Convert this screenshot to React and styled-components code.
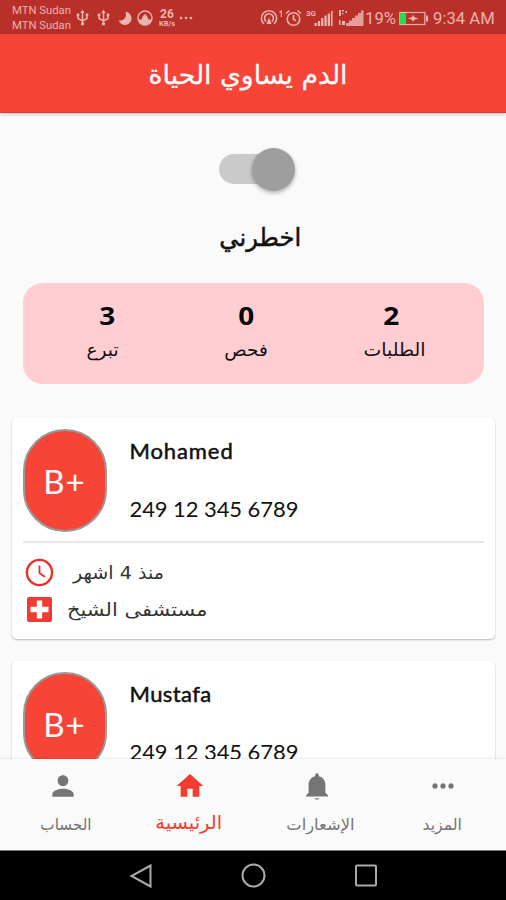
/* eslint-disable react/prop-types */
import React, { useState } from "react";
import styled, { createGlobalStyle } from "styled-components";

const GlobalStyle = createGlobalStyle`
    * {
        box-sizing: border-box;
    }

    body {
        margin: 0;
        background: #fafafa;
    }
`;

const Screen = styled.div`
    display: flex;
    flex-direction: column;
    width: 506px;
    height: 900px;
    overflow: hidden;
    background: #fafafa;
    color: #111;
    font-family: Lato, "DejaVu Sans", sans-serif;
`;

//  scaled inline text, $sx tunes the glyph width
const Label = styled.span`
    display: block;
    margin-left: ${(p) => p.$shift || 0}px;
    font-family: "DejaVu Sans", sans-serif;
    font-size: ${(p) => p.$size}px;
    line-height: ${(p) => p.$line || 24}px;
    white-space: nowrap;
    transform: scaleX(${(p) => p.$sx || 1});
    transform-origin: ${(p) => p.$origin || "center"};
    -webkit-text-stroke: ${(p) => p.$stroke || 0}px currentColor;
`;

const StatusBar = styled.div`
    display: flex;
    align-items: center;
    flex: none;
    height: 34px;
    padding: 2px 11px 0 12px;
    background: #b93029;
    color: #e9b3ae;
    font-family: Roboto, sans-serif;

    svg {
        flex: none;
        display: block;
    }
`;

const Carrier = styled.div`
    width: 61px;
    margin-right: 3px;
    font-size: 11.3px;
    line-height: 15.5px;
    white-space: nowrap;
`;

const Speed = styled.div`
    display: flex;
    flex-direction: column;
    align-items: center;
    width: 18px;
    margin: 0 3px 0 5px;
    font-size: 12px;
    font-weight: 700;
    line-height: 12px;
`;

const SpeedUnit = styled.span`
    font-size: 7.5px;
    line-height: 8px;
`;

const Spacer = styled.div`
    flex: 1;
`;

const StatusText = styled.span`
    width: ${(p) => p.$width}px;
    font-size: 16.7px;
    white-space: nowrap;
`;

const AppBar = styled.header`
    display: flex;
    justify-content: center;
    align-items: center;
    flex: none;
    height: 79px;
    padding: 4px 11px 0 0;
    background: #f64436;
    border-bottom: 1px solid #d93a2c;
    box-shadow: 0 1px 4px rgba(0, 0, 0, 0.25);
    color: #fff;
    z-index: 1;
`;

const Content = styled.main`
    flex: 1;
    min-height: 0;
    overflow: hidden;
    display: flex;
    flex-direction: column;
    align-items: center;
`;

const Track = styled.button`
    display: flex;
    align-items: center;
    justify-content: ${(p) => (p.$on ? "flex-end" : "flex-start")};
    flex: none;
    width: 76px;
    height: 30px;
    margin: 41px 0 0 8px;
    padding: 0;
    border: 0;
    background: linear-gradient(#cacaca, #cacaca) no-repeat;
    background-size: 68px 30px;
    border-radius: 15px;
`;

const Thumb = styled.span`
    width: 43px;
    height: 43px;
    flex: none;
    border-radius: 50%;
    background: #9e9e9e;
    box-shadow: 0 2px 4px rgba(0, 0, 0, 0.3);
`;

const SwitchCaption = styled.div`
    flex: none;
    margin: 39px 0 0 15px;
    height: 60px;
`;

const Stats = styled.section`
    display: grid;
    grid-template-columns: 124px 153px 138px;
    justify-content: start;
    flex: none;
    width: 461px;
    height: 101px;
    padding: 17px 0 0 23px;
    border-radius: 20px;
    background: #ffcdd2;
    text-align: center;
`;

const Stat = styled.div`
    display: flex;
    flex-direction: column;
    align-items: center;
`;

const StatValue = styled.b`
    font-family: "Open Sans", sans-serif;
    font-size: 25px;
    font-weight: 700;
    line-height: 31px;
    color: #080808;
    transform: scaleX(1.12);
`;

const Card = styled.article`
    flex: none;
    width: 483px;
    height: 221px;
    margin-top: ${(p) => p.$gap}px;
    padding: 11px 11px 0;
    background: #fff;
    border-radius: 5px;
    box-shadow: 0 1px 2px rgba(0, 0, 0, 0.28);
`;

const CardHead = styled.div`
    display: flex;
    height: 114px;
    border-bottom: 2px solid #e6e6e6;
`;

const Avatar = styled.div`
    display: flex;
    justify-content: center;
    align-items: center;
    width: 84px;
    height: 103px;
    border: 2px solid #999;
    border-radius: 42px;
    background: #f64436;
    color: #fff;
    font-size: 33px;
    letter-spacing: 1px;
`;

const Person = styled.div`
    margin-left: 23px;
    padding-top: 8px;
`;

const Name = styled.div`
    height: 58px;
    font-size: 22px;
    font-weight: 400;
    line-height: 28px;
    letter-spacing: ${(p) => p.$spacing || 0}px;
    -webkit-text-stroke: 0.5px #111;
`;

const Phone = styled.div`
    font-size: 22px;
    line-height: 28px;
    letter-spacing: -0.08px;
    white-space: nowrap;
`;

const Detail = styled.div`
    display: flex;
    align-items: center;
    height: 37px;
    padding-left: 2px;
    margin-top: ${(p) => p.$top || 0}px;
    color: #333;

    svg {
        flex: none;
        margin-right: ${(p) => p.$gap}px;
    }
`;

const BottomNav = styled.nav`
    display: grid;
    grid-template-columns: 126px 127px 127px 126px;
    flex: none;
    height: 91px;
    background: #fafafa;
    box-shadow: 0 -1px 2px rgba(0, 0, 0, 0.08);
    z-index: 1;
`;

const NavItem = styled.div`
    display: flex;
    flex-direction: column;
    align-items: center;
    padding-top: 11px;
    color: ${(p) => (p.$active ? "#f43b2f" : "#757575")};

    svg {
        display: block;
        margin-bottom: ${(p) => (p.$active ? 4 : 7)}px;
    }
`;

const SystemBar = styled.footer`
    display: flex;
    justify-content: center;
    align-items: center;
    gap: 88px;
    flex: none;
    height: 50px;
    background: #000;
    border-top: 1px solid #777;
`;

const UsbIcon = () => (
    <svg width="21" height="18" viewBox="0 0 21 18" fill="none" stroke="currentColor" strokeWidth="1.5">
        <path d="M6.500 2v13M2 6v3.500L6.500 12 11 9.500V6" />
        <path d="M4.300 4 6.500.8 8.700 4zM.7 4.600h2.600v2.600H.7zM9.700 4.600h2.600v2.600H9.700zM5 13.600h3v2.600H5z" fill="currentColor" stroke="none" />
    </svg>
);

const MoonIcon = () => (
    <svg width="19" height="15" viewBox="0 0 19 15">
        <path d="M7.500.8A6.600 6.600 0 1 1 .6 9.200C5 10.800 9.500 6.500 7.500.8z" fill="currentColor" />
    </svg>
);

const DomeIcon = () => (
    <svg width="16" height="16" viewBox="0 0 16 16">
        <circle cx="8" cy="8" r="7" fill="none" stroke="currentColor" strokeWidth="1.4" />
        <path d="M1.500 9.500h3l1.500-3.500L8 4l2 2 1.500 3.500h3a6.600 6.600 0 0 1-13 0z" fill="currentColor" />
    </svg>
);

const DotsIcon = () => (
    <svg width="14" height="4" viewBox="0 0 14 4" fill="currentColor">
        <circle cx="2" cy="2" r="1.300" />
        <circle cx="7" cy="2" r="1.300" />
        <circle cx="12" cy="2" r="1.300" />
    </svg>
);

const HotspotIcon = () => (
    <svg width="25" height="20" viewBox="0 0 25 20" fill="none" stroke="currentColor" strokeWidth="1.6">
        <path d="M4 16a7.600 7.600 0 1 1 10 0M6.200 13.500a4.400 4.400 0 1 1 5.600 0" />
        <path d="M9 9.500 11.500 16h-5z" fill="currentColor" stroke="none" />
        <path d="M19.500 4.200 21.300 3v6" strokeWidth="1.2" />
    </svg>
);

const AlarmIcon = () => (
    <svg width="17" height="18" viewBox="0 0 17 18" fill="none" stroke="currentColor" strokeWidth="1.6">
        <circle cx="8.500" cy="10" r="6.300" />
        <path d="M8.500 6v4.300l2.600 1.500M1 4.500 4.500 1.500M16 4.500l-3.500-3" />
    </svg>
);

const SignalIcon = () => (
    <svg width="32" height="19" viewBox="-4 0 32 19" fill="currentColor">
        <text x="0" y="7" fontSize="8" fontWeight="700" fontFamily="Roboto">3G</text>
        <path d="M8.500 14h2.300v3H8.500zM11.800 12h2.300v5h-2.300zM15.100 9h2.300v8h-2.300zM18.400 6.500h2.300V17h-2.300zM21.700 4.500H24V17h-2.300zM25 2h1.600v15H25z" />
    </svg>
);

const RoamingSignalIcon = () => (
    <svg width="31" height="19" viewBox="-3 0 31 19" fill="currentColor">
        <path d="M26.500 1.500V17H9v-3h3v-2.500h3V9h3V6.500h3V4h3V1.500z" opacity="0.85" />
        <path d="M2 1h2v6H2zM5 1h2v1.500H5zM5 4h1.500v1.300H5zM8.500 2H10v2H8.500zM2 11h1.500v5H2zM5 12h3v4H5z" />
    </svg>
);

const BatteryIcon = () => (
    <svg width="34" height="15" viewBox="0 0 34 15">
        <rect x=".8" y="1.500" width="25" height="12" fill="none" stroke="currentColor" strokeWidth="1.2" />
        <path d="M27 4.500h2v6h-2z" fill="currentColor" />
        <path d="M1 2h6v11H1z" fill="#20dd55" />
        <path d="M8.500 7.500 13 6l1-2 2 2.500 3.500 1-4 1.200-1.500 2-1.500-2.200z" fill="currentColor" />
    </svg>
);

const ClockIcon = () => (
    <svg width="29" height="29" viewBox="0 0 29 29" fill="none" stroke="#ec2f27" strokeWidth="2.4">
        <circle cx="14.500" cy="14.500" r="12.600" />
        <path d="M14.500 7.500v7.500l5.500 4" strokeWidth="1.8" />
    </svg>
);

const HospitalIcon = () => (
    <svg width="29" height="29" viewBox="0 0 29 29">
        <rect x="2" y="2" width="25" height="25" rx="2" fill="#f03a32" />
        <path d="M11.800 5.500h5.400v6.300h6.300v5.400h-6.300v6.300h-5.400v-6.300H5.500v-5.400h6.300z" fill="#fff" />
    </svg>
);

const navIcons = {
    account: "M12 12c2.210 0 4-1.790 4-4s-1.790-4-4-4-4 1.790-4 4 1.790 4 4 4zm0 2c-2.670 0-8 1.340-8 4v2h16v-2c0-2.660-5.330-4-8-4z",
    home: "M10 20v-6h4v6h5v-8h3L12 3 2 12h3v8z",
    bell: "M12 22.200c1 0 1.800-.5 1.800-1.100h-3.600c0 .6.8 1.100 1.800 1.100zM18.300 17v-6c0-3.100-1.900-5.600-4.900-6.300V3.900C13.400 3.100 12.800 2.500 12 2.500s-1.400.6-1.400 1.400v.8C7.600 5.400 5.700 7.900 5.700 11v6L3.800 19v.8h16.400V19z",
    more: "M6 10c-1.100 0-2 .9-2 2s.9 2 2 2 2-.9 2-2-.9-2-2-2zm12 0c-1.100 0-2 .9-2 2s.9 2 2 2 2-.9 2-2-.9-2-2-2zm-6 0c-1.100 0-2 .9-2 2s.9 2 2 2 2-.9 2-2-.9-2-2-2z",
};

const NavIcon = ({ name }) => (
    <svg width="32" height="32" viewBox="0 0 24 24" fill="currentColor">
        <path d={navIcons[name]} />
    </svg>
);

const stats = [
    { value: 3, text: "تبرع", sx: 1.03, shift: -10 },
    { value: 0, text: "فحص", sx: 1.03, shift: 0 },
    { value: 2, text: "الطلبات", sx: 1.05, shift: 6 },
];

const donors = [
    { name: "Mohamed", spacing: 0.9, gap: 34 },
    { name: "Mustafa", spacing: 0.4, gap: 22 },
];

const tabs = [
    { icon: "account", text: "الحساب", size: 16, sx: 0.95, shift: 6 },
    { icon: "home", text: "الرئيسية", size: 19, sx: 1.02, shift: -2 },
    { icon: "bell", text: "الإشعارات", size: 16, sx: 1.02, shift: 8 },
    { icon: "more", text: "المزيد", size: 16, sx: 0.98, shift: -1 },
];

export default function App() {
    const [notify, setNotify] = useState(true);

    return (
        <Screen>
            <GlobalStyle />
            <StatusBar>
                <Carrier>MTN Sudan<br />MTN Sudan</Carrier>
                <UsbIcon />
                <UsbIcon />
                <MoonIcon />
                <DomeIcon />
                <Speed>
                    <span>26</span>
                    <SpeedUnit>KB/s</SpeedUnit>
                </Speed>
                <DotsIcon />
                <Spacer />
                <HotspotIcon />
                <AlarmIcon />
                <SignalIcon />
                <RoamingSignalIcon />
                <StatusText $width={34}>19%</StatusText>
                <BatteryIcon />
                <StatusText $width={62}>9:34 AM</StatusText>
            </StatusBar>
            <AppBar>
                <Label dir="rtl" $size={26} $line={36} $sx={1.025} $stroke={0.3}>الدم يساوي الحياة</Label>
            </AppBar>
            <Content>
                <Track $on={notify} onClick={() => setNotify(!notify)}>
                    <Thumb />
                </Track>
                <SwitchCaption>
                    <Label dir="rtl" $size={25} $line={30} $sx={0.97} $stroke={0.5}>اخطرني</Label>
                </SwitchCaption>
                <Stats>
                    {stats.map((s) => (
                        <Stat key={s.text}>
                            <StatValue>{s.value}</StatValue>
                            <Label dir="rtl" $size={18} $line={38} $sx={s.sx} $shift={s.shift}>{s.text}</Label>
                        </Stat>
                    ))}
                </Stats>
                {donors.map((d) => (
                    <Card key={d.name} $gap={d.gap}>
                        <CardHead>
                            <Avatar>B+</Avatar>
                            <Person>
                                <Name $spacing={d.spacing}>{d.name}</Name>
                                <Phone>249 12 345 6789</Phone>
                            </Person>
                        </CardHead>
                        <Detail $top={11} $gap={19}>
                            <ClockIcon />
                            <Label dir="rtl" $size={18} $sx={1.06} $origin="left">منذ 4 اشهر</Label>
                        </Detail>
                        <Detail $gap={13}>
                            <HospitalIcon />
                            <Label dir="rtl" $size={18} $sx={1.165} $origin="left">مستشفى الشيخ</Label>
                        </Detail>
                    </Card>
                ))}
            </Content>
            <BottomNav>
                {tabs.map((t) => (
                    <NavItem key={t.icon} $active={t.icon === "home"}>
                        <NavIcon name={t.icon} />
                        <Label dir="rtl" $size={t.size} $line={32} $sx={t.sx} $shift={t.shift}>{t.text}</Label>
                    </NavItem>
                ))}
            </BottomNav>
            <SystemBar>
                <svg width="24" height="26" viewBox="0 0 24 26" fill="none" stroke="#aaa" strokeWidth="2">
                    <path d="M21.500 2.500v21L2.500 13z" />
                </svg>
                <svg width="25" height="26" viewBox="0 0 25 26" fill="none" stroke="#aaa" strokeWidth="2">
                    <circle cx="12.500" cy="12.500" r="11" />
                </svg>
                <svg width="24" height="26" viewBox="0 0 24 26" fill="none" stroke="#aaa" strokeWidth="2">
                    <rect x="2" y="2.500" width="20" height="20" rx="1" />
                </svg>
            </SystemBar>
        </Screen>
    );
}
